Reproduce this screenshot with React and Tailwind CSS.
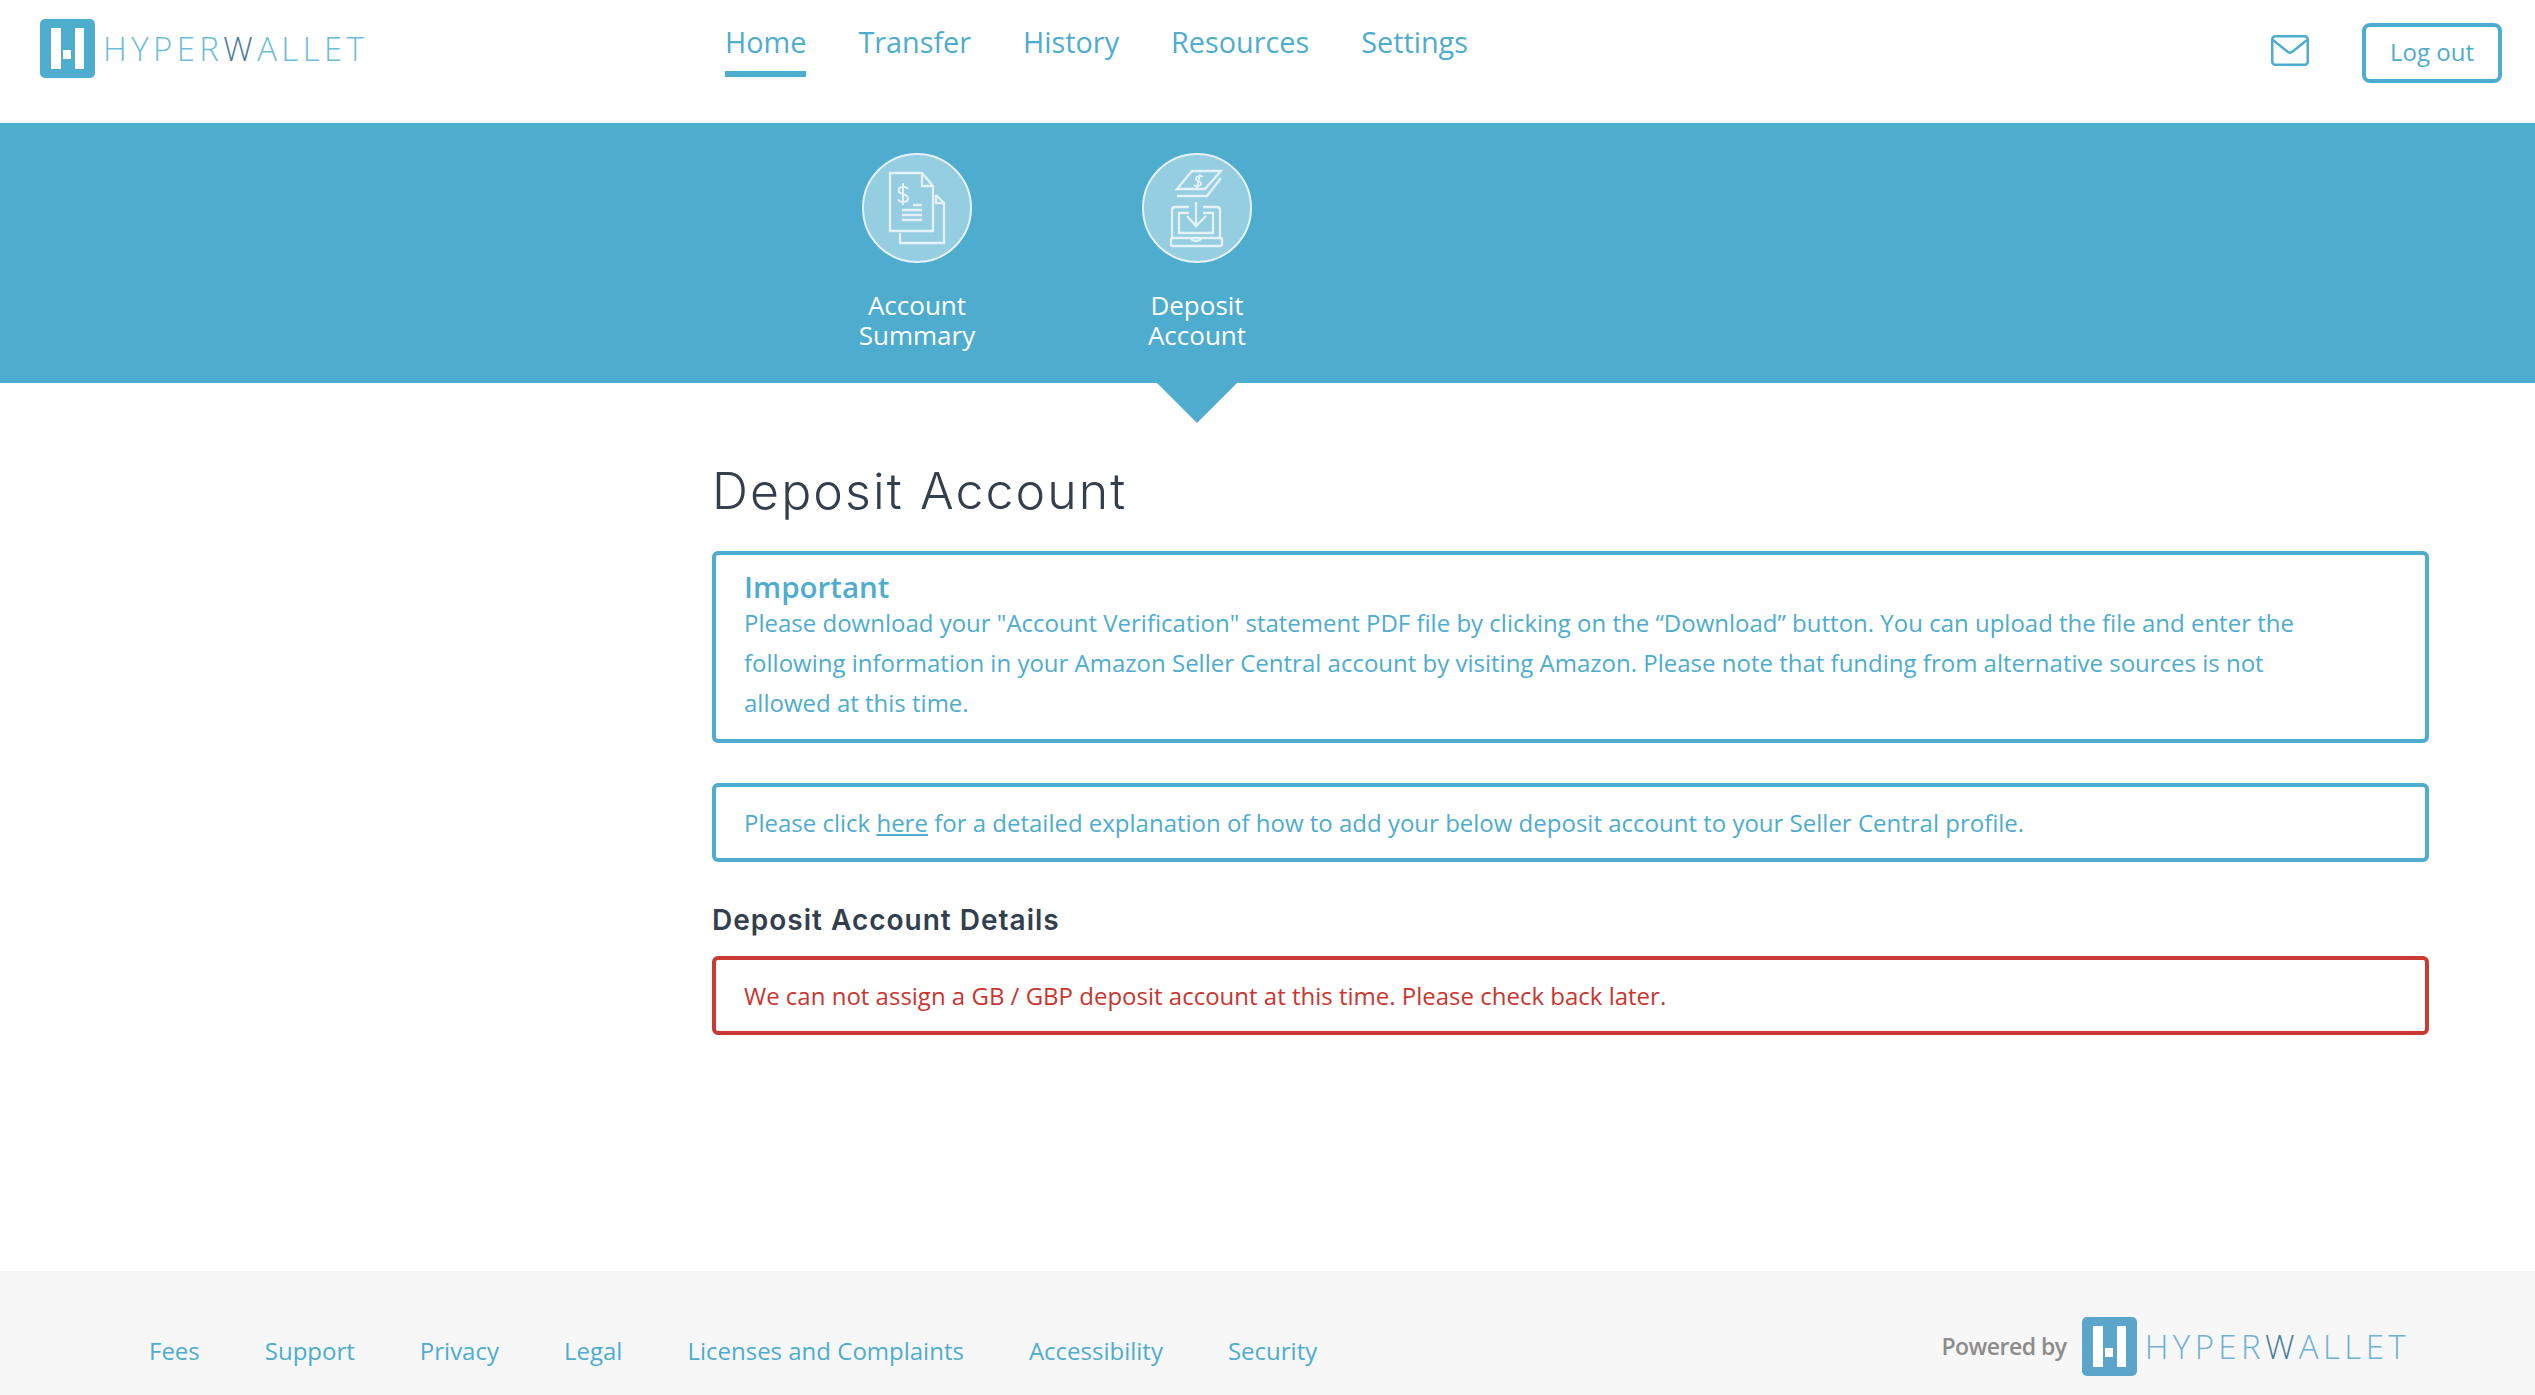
const navItems = ['Home', 'Transfer', 'History', 'Resources', 'Settings'];
const footerLinks = ['Fees', 'Support', 'Privacy', 'Legal', 'Licenses and Complaints', 'Accessibility', 'Security'];

const Logo = ({ small }) => (
  <div className="flex items-center gap-[8px]">
    <svg width="55" height="59" viewBox="0 0 55 59" className="shrink-0">
      <rect width="55" height="59" rx="5" fill={small ? '#5aa5c9' : '#4eacce'} />
      <rect x="11" y="9" width="10" height="41" fill="#fff" />
      <rect x="35" y="9" width="9" height="41" fill="#fff" />
      <rect x="23" y="31" width="8" height="9" fill="#fff" />
    </svg>
    <span className={`font-['Open_Sans',sans-serif] font-light text-[33px] leading-none tracking-[4.4px] whitespace-nowrap ${small ? 'text-[#6fb1d2]' : 'text-[#6dbcd8]'}`}>
      HYPER<span className="text-[#4a7d98]">W</span>ALLET
    </span>
  </div>
);

const SummaryIcon = () => (
  <svg viewBox="0 0 110 110" className="w-full h-full" fill="none" stroke="#e4f2f7" strokeWidth="2.300">
    <path d="M28 20H60L71 33V78H28Z" />
    <path d="M60 20V33H71" />
    <path d="M74 42L82 50V90H38V80" />
    <path d="M74 42V50H82" />
    <path d="M46 36C44 33 37 33 36.500 37C36 42 46 40 46 45.500C46 50 38 50 36 46.500M41 30V52" strokeWidth="2" />
    <path d="M51 52H60M40 57H60M40 62H60M40 67H60" />
  </svg>
);

const DepositIcon = () => (
  <svg viewBox="0 0 110 110" className="w-full h-full" fill="none" stroke="#e4f2f7" strokeWidth="2.300">
    <path d="M50 18H79L63 36H35Z" />
    <path d="M35 43H65L79 25" />
    <path d="M61 24C59 22 54 23 54 26C54 29 60 28 59 31C58 34 54 34 52 32M58 21L55 35" strokeWidth="1.800" />
    <path d="M47 54H33Q30 54 30 57V85M61 54H75Q78 54 78 57V85" />
    <path d="M47 60H37V80H71V60H61" />
    <path d="M54 49V73M45 63L54 73L64 63" />
    <rect x="29" y="85" width="51" height="8" rx="2" />
    <path d="M49 85Q50 88 54 88Q58 88 59 85" />
  </svg>
);

const SubNavItem = ({ icon, first, second, active }) => (
  <div className="relative w-[200px] flex flex-col items-center pt-[30px]">
    <div className="w-[110px] h-[110px] rounded-full border-2 border-[#e4f2f7] bg-[#95cde1] overflow-hidden box-border">
      <div className="-m-[2px] w-[110px] h-[110px]">{icon}</div>
    </div>
    <div className="mt-[27px] text-center text-white text-[26px] leading-[30px]">
      <div>{first}</div>
      <div>{second}</div>
    </div>
    {active && (
      <div className="absolute top-full left-1/2 -translate-x-1/2 w-0 h-0 border-l-[40px] border-r-[40px] border-t-[40px] border-l-transparent border-r-transparent border-t-[#4eacce]"></div>
    )}
  </div>
);

export default function App() {
  return (
    <div className="min-h-screen flex flex-col bg-white font-['Open_Sans',sans-serif] text-[#4eacce] overflow-hidden">
      {/* Header */}
      <header className="h-[123px] flex items-start shrink-0">
        <div className="w-[725px] pl-[40px] pt-[19px] shrink-0"><Logo /></div>
        <nav className="flex gap-[52px] flex-1">
          {navItems.map((n, i) => (
            <a key={n} className={`block h-[77px] pt-[20px] text-[28.8px] leading-[44px] ${i === 0 ? 'border-b-[6px] border-[#4eacce]' : ''}`}>{n}</a>
          ))}
        </nav>
        <div className="flex items-start gap-[53px] pt-[23px] pr-[33px]">
          <svg width="38" height="31" viewBox="0 0 38 31" fill="none" stroke="#4eacce" strokeWidth="2.500" className="mt-[12px]">
            <rect x="1.250" y="1.250" width="35.500" height="28.500" rx="3" />
            <path d="M2 5L17 17Q19 18.500 21 17L36 5" />
          </svg>
          <button className="w-[140px] h-[60px] border-[4px] border-[#4eacce] rounded-[8px] text-[24px] leading-none pb-[3px] text-[#4eacce]">Log out</button>
        </div>
      </header>

      {/* Blue band */}
      <div className="h-[260px] bg-[#4eacce] flex pl-[817px] gap-[80px] shrink-0">
        <SubNavItem icon={<SummaryIcon />} first="Account" second="Summary" />
        <SubNavItem icon={<DepositIcon />} first="Deposit" second="Account" active />
      </div>

      {/* Content */}
      <main className="flex-1 pl-[712px] pr-[106px] pt-[78px]">
        <h1 className="font-['Inter',sans-serif] font-light text-[50px] leading-[60px] tracking-[2.1px] text-[#333f4d] mb-[30px]">Deposit Account</h1>

        <div className="border-[4px] border-[#4eacce] rounded-[6px] pl-[28px] pr-[100px] pt-[12px] pb-[16px]">
          <div className="text-[29.5px] leading-[36px] font-semibold pt-[2px] -mb-[2px]">Important</div>
          <p className="text-[24px] leading-[40px]">
            Please download your "Account Verification" statement PDF file by clicking on the “Download” button. You can upload the file and enter the following information in your Amazon Seller Central account by visiting Amazon. Please note that funding from alternative sources is not allowed at this time.
          </p>
        </div>

        <div className="mt-[40px] h-[79px] border-[4px] border-[#4eacce] rounded-[6px] pl-[28px] flex items-center text-[24px]">
          <p>Please click <a className="underline">here</a> for a detailed explanation of how to add your below deposit account to your Seller Central profile.</p>
        </div>

        <h2 className="mt-[38px] mb-[16px] font-['Inter',sans-serif] font-semibold text-[28px] leading-[40px] tracking-[1px] text-[#333f4d]">Deposit Account Details</h2>

        <div className="h-[79px] border-[4px] border-[#c93a33] rounded-[6px] pl-[28px] flex items-center text-[24px] text-[#c9352f]">
          <p>We can not assign a GB / GBP deposit account at this time. Please check back later.</p>
        </div>
      </main>

      {/* Footer */}
      <footer className="h-[124px] bg-[#f7f7f7] flex items-start justify-between pl-[149px] pr-[125px] shrink-0">
        <div className="flex gap-[65px] pt-[61px] text-[24px] leading-[38px]">
          {footerLinks.map(l => <a key={l}>{l}</a>)}
        </div>
        <div className="flex items-center gap-[15px] pt-[46px]">
          <span className="text-[#8c8c8c] text-[23px] font-semibold tracking-[-0.5px]">Powered by</span>
          <Logo small />
        </div>
      </footer>
    </div>
  );
}
